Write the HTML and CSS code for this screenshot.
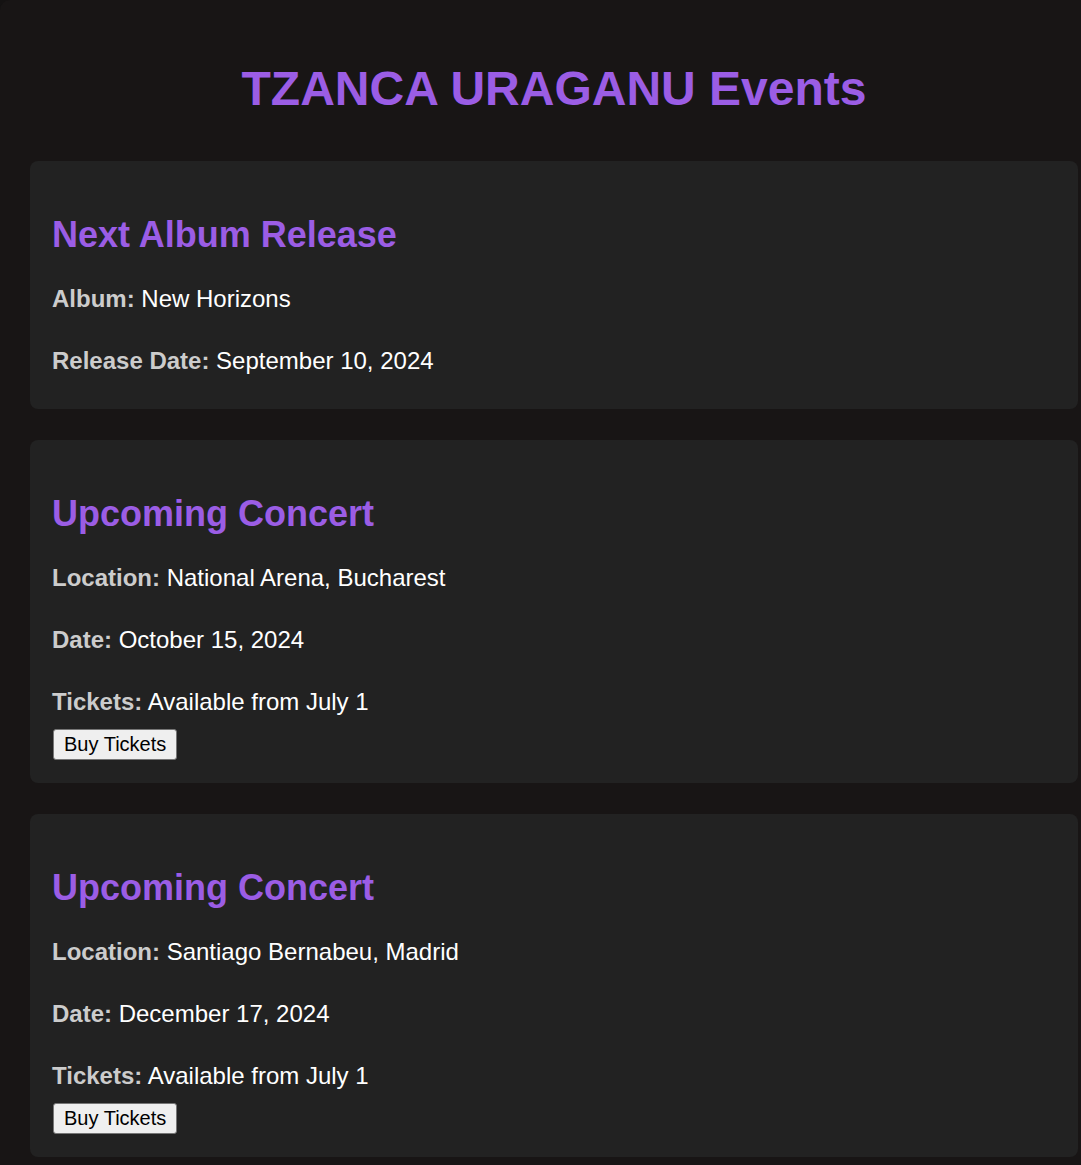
FILE: index.html
```html
<!DOCTYPE html>
<html lang="en">
<head>
<meta charset="utf-8">
<title>TZANCA URAGANU Events</title>
<link rel="stylesheet" href="styles.css">
</head>
<body>
<div class="page">
  <h1 class="title">TZANCA URAGANU Events</h1>

  <section class="card">
    <h2 class="card-title">Next Album Release</h2>
    <p class="row"><span class="label">Album:</span> New Horizons</p>
    <p class="row row-end"><span class="label">Release Date:</span> September 10, 2024</p>
  </section>

  <section class="card">
    <h2 class="card-title">Upcoming Concert</h2>
    <p class="row"><span class="label">Location:</span> National Arena, Bucharest</p>
    <p class="row"><span class="label">Date:</span> October 15, 2024</p>
    <p class="row row-last"><span class="label">Tickets:</span> Available from July 1</p>
    <button class="buy" type="button">Buy Tickets</button>
  </section>

  <section class="card">
    <h2 class="card-title">Upcoming Concert</h2>
    <p class="row"><span class="label">Location:</span> Santiago Bernabeu, Madrid</p>
    <p class="row"><span class="label">Date:</span> December 17, 2024</p>
    <p class="row row-last"><span class="label">Tickets:</span> Available from July 1</p>
    <button class="buy" type="button">Buy Tickets</button>
  </section>
</div>
</body>
</html>
```

FILE: styles.css
```css
html, body {
  margin: 0;
  padding: 0;
  background: #141212;
  overflow: hidden;
}

body {
  font-family: "Liberation Sans", Arial, sans-serif;
  color: #ffffff;
}

.page {
  width: 1108px;
  box-sizing: border-box;
  padding: 30px 30px 30px;
  background: #181515;
  border-radius: 10px;
  min-height: 1165px;
}

.title {
  margin: 31px 0 45px;
  text-align: center;
  font-size: 48px;
  line-height: 55px;
  font-weight: bold;
  color: #9b5de5;
}

.card {
  display: flex;
  flex-direction: column;
  align-items: flex-start;
  background: #222222;
  border-radius: 8px;
  padding: 20px 22px 23px;
  margin-bottom: 31px;
}

.card-title {
  margin: 33px 0 30px;
  font-size: 36px;
  line-height: 41px;
  font-weight: bold;
  color: #9b5de5;
}

.row {
  margin: 0 0 34px;
  font-size: 24px;
  line-height: 28px;
}

.row-end {
  margin-bottom: 11px;
}

.row-last {
  margin-bottom: 13px;
}

.label {
  font-weight: bold;
  color: #cccccc;
}

.buy {
  font-family: "Liberation Sans", Arial, sans-serif;
  font-size: 20px;
  color: #000000;
  background: #efefef;
  border: 1px solid #767676;
  border-radius: 3px;
  padding: 2px 10px;
  height: 31px;
  margin-left: 1px;
}
```
